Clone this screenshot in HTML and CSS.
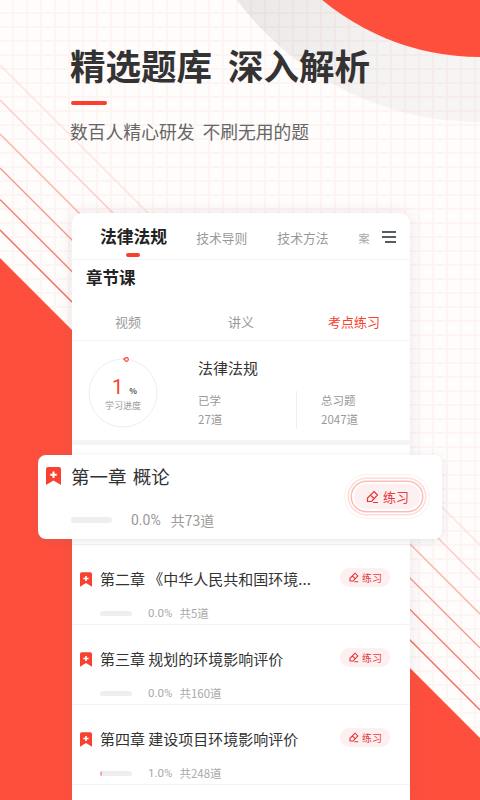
FILE: index.html
```html
<!DOCTYPE html>
<html lang="zh">
<head>
<meta charset="utf-8">
<title>精选题库</title>
<link rel="stylesheet" href="styles.css">
</head>
<body>
<main class="page">
  <svg class="backdrop" width="480" height="800" viewBox="0 0 480 800">
    <defs>
      <pattern id="grid" width="14" height="14" patternUnits="userSpaceOnUse" x="0" y="0">
        <path d="M13 0V14M0 13H14" stroke="#fdf4f4" stroke-width="2" fill="none"/>
      </pattern>
      <linearGradient id="halo" gradientUnits="userSpaceOnUse" x1="250" y1="0" x2="440" y2="130">
        <stop offset="0" stop-color="#000" stop-opacity="0.08"/>
        <stop offset="0.6" stop-color="#000" stop-opacity="0.04"/>
        <stop offset="1" stop-color="#000" stop-opacity="0.03"/>
      </linearGradient>
      <linearGradient id="fade" gradientUnits="userSpaceOnUse" x1="0" y1="230" x2="83.500" y2="146.500">
        <stop offset="0" stop-color="#f56a59"/>
        <stop offset="0.55" stop-color="#f9b0a7"/>
        <stop offset="1" stop-color="#fce4e0"/>
      </linearGradient>
    </defs>
    <rect width="480" height="800" fill="#fffcfc"/>
    <rect width="480" height="800" fill="url(#grid)"/>
    <circle cx="480" cy="-181" r="303" fill="url(#halo)"/>
    <circle cx="480" cy="-190" r="247" fill="#fe4f3d"/>
    <g fill="none" stroke-width="1.400" stroke="url(#fade)">
      <path d="M0 65L480 545"/>
      <path d="M0 100L480 580"/>
      <path d="M0 134L480 614"/>
      <path d="M0 168L480 648"/>
      <path d="M0 199.500L480 679.500"/>
      <path d="M0 230L480 710"/>
    </g>
    <path d="M0 258L480 738V800H0Z" fill="#fe4f3d"/>
  </svg>

  <header class="hero">
    <h1 class="hero-title">精选题库&nbsp;&nbsp;深入解析</h1>
    <div class="hero-rule"></div>
    <p class="hero-sub">数百人精心研发&nbsp;&nbsp;不刷无用的题</p>
  </header>

  <section class="card">
    <nav class="tabs">
      <div class="tab tab-active">法律法规<span class="tab-mark"></span></div>
      <div class="tab">技术导则</div>
      <div class="tab">技术方法</div>
      <div class="tab tab-cut">案</div>
      <svg class="menu-icon" width="14" height="12" viewBox="0 0 14 12">
        <path d="M0 1H14M0 6H14M3 11H14" stroke="#1f2a33" stroke-width="1.600" fill="none"/>
      </svg>
    </nav>

    <h2 class="section-title">章节课</h2>

    <div class="subtabs">
      <span class="subtab">视频</span>
      <span class="subtab">讲义</span>
      <span class="subtab subtab-active">考点练习</span>
    </div>

    <div class="summary">
      <div class="ring">
        <svg class="ring-art" width="72" height="76" viewBox="0 0 72 76">
          <circle cx="36" cy="39" r="34" fill="none" stroke="#eeeeee" stroke-width="1"/>
          <path d="M36 5A34 34 0 0 1 40 5.200" fill="none" stroke="#fb3f2d" stroke-width="1.200"/>
          <circle cx="39.500" cy="5.500" r="1.800" fill="#fff" stroke="#fb3f2d" stroke-width="1.200"/>
        </svg>
        <div class="ring-value"><span class="ring-num">1</span><span class="ring-pct">%</span></div>
        <div class="ring-label">学习进度</div>
      </div>
      <div class="summary-body">
        <div class="summary-name">法律法规</div>
        <div class="stats">
          <div class="stat stat-first"><span>已学</span><span>27道</span></div>
          <div class="stat"><span>总习题</span><span>2047道</span></div>
        </div>
      </div>
    </div>

    <div class="strip"></div>

    <ul class="chapters">
      <li class="chapter chapter-hidden"></li>
      <li class="chapter">
        <div class="chapter-top">
          <svg class="mark" width="12" height="15" viewBox="0 0 15 18"><path d="M2 0H13A2 2 0 0 1 15 2V18L7.500 13.500L0 18V2A2 2 0 0 1 2 0Z" fill="#f9412f"/><path d="M7.500 4.500V11M4.250 7.750H10.750" stroke="#fff" stroke-width="2"/></svg>
          <span class="chapter-name">第二章 《中华人民共和国环境...</span>
          <span class="practice"><svg class="pen" width="11" height="11" viewBox="0 0 14 14"><path d="M9 1.500L12.500 5L6.500 11.500H2.500V8ZM5.500 5L9 8.500M8 12.500H13" fill="none" stroke="#e8343a" stroke-width="1.400"/></svg>练习</span>
        </div>
        <div class="chapter-meta"><span class="bar"></span><span class="pct">0.0%</span><span>共5道</span></div>
      </li>
      <li class="chapter">
        <div class="chapter-top">
          <svg class="mark" width="12" height="15" viewBox="0 0 15 18"><path d="M2 0H13A2 2 0 0 1 15 2V18L7.500 13.500L0 18V2A2 2 0 0 1 2 0Z" fill="#f9412f"/><path d="M7.500 4.500V11M4.250 7.750H10.750" stroke="#fff" stroke-width="2"/></svg>
          <span class="chapter-name">第三章 规划的环境影响评价</span>
          <span class="practice"><svg class="pen" width="11" height="11" viewBox="0 0 14 14"><path d="M9 1.500L12.500 5L6.500 11.500H2.500V8ZM5.500 5L9 8.500M8 12.500H13" fill="none" stroke="#e8343a" stroke-width="1.400"/></svg>练习</span>
        </div>
        <div class="chapter-meta"><span class="bar"></span><span class="pct">0.0%</span><span>共160道</span></div>
      </li>
      <li class="chapter">
        <div class="chapter-top">
          <svg class="mark" width="12" height="15" viewBox="0 0 15 18"><path d="M2 0H13A2 2 0 0 1 15 2V18L7.500 13.500L0 18V2A2 2 0 0 1 2 0Z" fill="#f9412f"/><path d="M7.500 4.500V11M4.250 7.750H10.750" stroke="#fff" stroke-width="2"/></svg>
          <span class="chapter-name">第四章 建设项目环境影响评价</span>
          <span class="practice"><svg class="pen" width="11" height="11" viewBox="0 0 14 14"><path d="M9 1.500L12.500 5L6.500 11.500H2.500V8ZM5.500 5L9 8.500M8 12.500H13" fill="none" stroke="#e8343a" stroke-width="1.400"/></svg>练习</span>
        </div>
        <div class="chapter-meta"><span class="bar"><span class="bar-fill"></span></span><span class="pct">1.0%</span><span>共248道</span></div>
      </li>
    </ul>
  </section>

  <article class="float-card">
    <div class="float-main">
      <div class="float-top">
        <svg class="float-mark" width="15" height="18" viewBox="0 0 15 18"><path d="M2 0H13A2 2 0 0 1 15 2V18L7.500 13.500L0 18V2A2 2 0 0 1 2 0Z" fill="#f9412f"/><path d="M7.500 4.500V11M4.250 7.750H10.750" stroke="#fff" stroke-width="2"/></svg>
        <span class="float-name">第一章 概论</span>
      </div>
      <div class="float-meta"><span class="float-bar"></span><span class="float-pct">0.0%</span><span>共73道</span></div>
    </div>
    <div class="float-practice"><svg class="pen" width="14" height="14" viewBox="0 0 14 14"><path d="M9 1.500L12.500 5L6.500 11.500H2.500V8ZM5.500 5L9 8.500M8 12.500H13" fill="none" stroke="#e8343a" stroke-width="1.200"/></svg>练习</div>
  </article>
</main>
</body>
</html>
```
FILE: styles.css
```css
* { box-sizing: border-box; }
html, body { margin: 0; padding: 0; }
body { font-family: "Noto Sans CJK SC", "Noto Sans", sans-serif; color: #333; }
ul { list-style: none; margin: 0; padding: 0; }
h1, h2, p { margin: 0; }

.page { position: relative; width: 480px; height: 800px; overflow: hidden; padding-top: 39px; }
.backdrop { position: absolute; left: 0; top: 0; }

.hero { position: relative; padding-left: 70px; height: 174px; }
.hero-title { font-size: 35.500px; line-height: 52px; font-weight: 700; color: #333; white-space: nowrap; }
.hero-rule { width: 36px; height: 4px; border-radius: 2px; background: #fb3f2d; margin: 10px 0 0 1px; }
.hero-sub { font-size: 17.800px; line-height: 26px; color: #666; margin-top: 13px; white-space: nowrap; }

.card { position: relative; margin-left: 72px; width: 338px; height: 587px; background: #fff; border-radius: 10px 10px 0 0; box-shadow: 0 0 14px rgba(120, 90, 90, 0.14); }

.tabs { position: relative; display: flex; align-items: center; height: 47px; padding-left: 28px; border-bottom: 1px solid #f4f4f4; }
.tab { position: relative; font-size: 12.800px; color: #999; margin-right: 30px; white-space: nowrap; line-height: 20px; padding-top: 4px; }
.tab-active { font-size: 16.800px; font-weight: 700; color: #222; margin-right: 29px; padding-top: 0; }
.tab-mark { position: absolute; left: 26px; top: 27px; width: 14px; height: 4px; border-radius: 2px; background: #fb3f2d; }
.tab-cut { font-size: 11px; margin: 0; color: #a8a8a8; }
.menu-icon { position: absolute; left: 310px; top: 18px; }

.section-title { font-size: 16.500px; line-height: 24px; font-weight: 700; color: #222; padding: 5px 0 0 14px; }

.subtabs { display: flex; height: 51px; padding: 23px 0 0 43px; font-size: 13px; line-height: 20px; color: #999; }
.subtab { white-space: nowrap; }
.subtab:nth-child(2) { margin-left: 87px; }
.subtab:nth-child(3) { margin-left: 74px; }
.subtab-active { color: #fb3f2d; }

.summary { display: flex; height: 100px; border-top: 1px solid #f5f5f5; }
.ring { position: relative; width: 126px; flex: none; }
.ring-art { position: absolute; left: 15px; top: 13px; }
.ring-value { position: absolute; left: 40px; top: 33px; display: flex; align-items: baseline; line-height: 26px; }
.ring-num { font-size: 20px; color: #fb3f2d; font-family: "Roboto", sans-serif; }
.ring-pct { font-size: 8px; font-weight: 700; color: #555; margin-left: 6px; }
.ring-label { position: absolute; left: 33px; top: 58px; font-size: 9px; line-height: 13px; color: #999; white-space: nowrap; }
.summary-body { flex: 1; padding-top: 15px; }
.summary-name { font-size: 15px; line-height: 24px; color: #333; }
.stats { display: flex; margin-top: 11px; }
.stat { display: flex; flex-direction: column; font-size: 11.500px; line-height: 19px; color: #999; width: 123px; padding: 0 0 0 24px; white-space: nowrap; }
.stat-first { width: 99px; padding-left: 0; border-right: 1px solid #eee; }

.strip { height: 5px; background: #f5f5f5; }

.chapter { height: 80px; border-bottom: 1px solid #f3f3f3; padding: 0 0 0 8px; }
.chapter-hidden { height: 100px; }
.chapter-top { display: flex; align-items: center; height: 30px; padding-top: 19px; box-sizing: content-box; }
.mark { flex: none; }
.chapter-name { font-size: 15px; line-height: 22px; color: #333; margin-left: 8px; white-space: nowrap; width: 240px; }
.practice { display: flex; align-items: center; justify-content: center; gap: 3px; width: 50px; height: 19px; margin-bottom: 4px; border-radius: 10px; background: #fdf0f0; color: #ea3b3f; font-size: 10px; white-space: nowrap; flex: none; }
.chapter-meta { display: flex; align-items: center; height: 16px; margin-top: 11px; padding-left: 20px; font-size: 11.500px; color: #aaa; }
.bar { display: block; width: 32px; height: 5px; border-radius: 3px; background: #eeeeee; overflow: hidden; }
.bar-fill { display: block; width: 1.500px; height: 5px; background: #f9a09a; }
.pct { margin: 0 7px 0 16px; font-family: "Roboto", sans-serif; }

.float-card { position: absolute; left: 38px; top: 455px; width: 404px; height: 84px; display: flex; background: #fff; border-radius: 8px; box-shadow: 0 2px 8px rgba(110, 110, 130, 0.16); }
.float-main { flex: 1; padding: 10px 0 0 8px; }
.float-top { display: flex; align-items: flex-start; }
.float-mark { margin-top: 2px; flex: none; }
.float-name { font-size: 18.500px; line-height: 23px; color: #333; margin-left: 10px; white-space: nowrap; word-spacing: 2px; }
.float-meta { display: flex; align-items: center; margin: 22px 0 0 25px; height: 20px; font-size: 14px; color: #999; }
.float-bar { display: block; width: 41px; height: 6px; border-radius: 3px; background: #eeeeee; }
.float-pct { margin: 0 10px 0 19px; font-family: "Roboto", sans-serif; }
.float-practice { display: flex; align-items: center; justify-content: center; gap: 4px; width: 66px; height: 25px; margin: 29px 22px 0 0; border-radius: 13px; background: #fdf0f0; color: #ea3b3f; font-size: 13px; white-space: nowrap; box-shadow: 0 0 0 2px #fff, 0 0 0 3.500px #fbbdb5, 0 0 0 5px #fff, 0 0 0 6.500px #fddbd7, 0 0 0 9px #fff, 0 0 0 10px #fff0ee; }
```
